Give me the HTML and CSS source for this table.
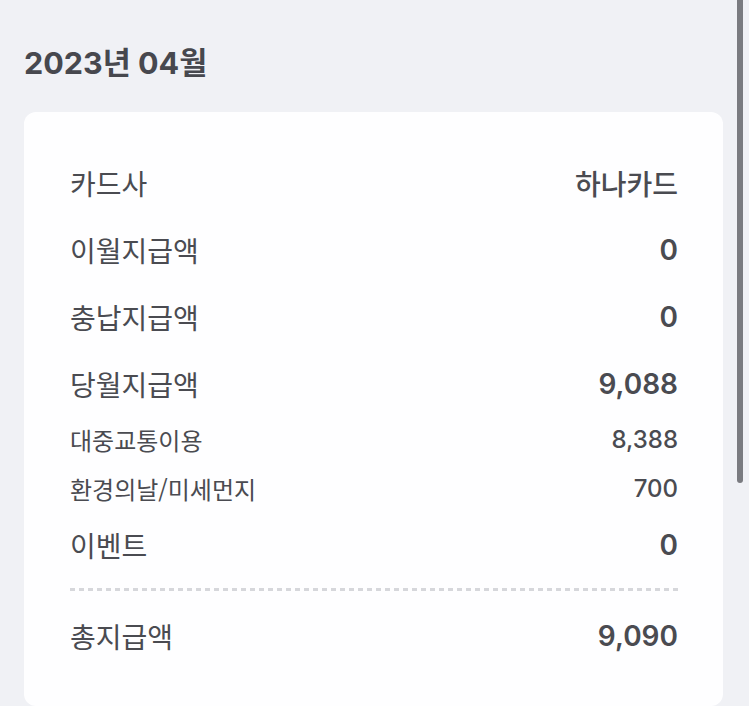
FILE: index.html
```html
<!DOCTYPE html>
<html lang="ko">
<head>
<meta charset="utf-8">
<link rel="stylesheet" href="styles.css">
</head>
<body>
<div class="page">
  <h1 class="title">2023년 04월</h1>
  <section class="card">
    <div class="row main"><span class="label">카드사</span><span class="value text">하나카드</span></div>
    <div class="row main"><span class="label">이월지급액</span><span class="value">0</span></div>
    <div class="row main"><span class="label">충납지급액</span><span class="value">0</span></div>
    <div class="row main"><span class="label">당월지급액</span><span class="value">9,088</span></div>
    <div class="subs">
      <div class="row sub"><span class="label">대중교통이용</span><span class="value">8,388</span></div>
      <div class="row sub"><span class="label">환경의날/미세먼지</span><span class="value">700</span></div>
    </div>
    <div class="row main"><span class="label">이벤트</span><span class="value">0</span></div>
    <div class="divider"></div>
    <div class="row main"><span class="label">총지급액</span><span class="value">9,090</span></div>
  </section>
</div>
<div class="scrollbar"></div>
</body>
</html>
```

FILE: styles.css
```css
* { box-sizing: border-box; }
html, body { margin: 0; padding: 0; }
body {
  background: #f0f1f5;
  font-family: "Inter", "Noto Sans CJK KR", sans-serif;
  color: #4a4b51;
  overflow: hidden;
  height: 706px;
}
.page {
  padding: 43px 26px 0 24px;
}
.title {
  margin: 0;
  font-size: 30.5px;
  line-height: 40px;
  font-weight: 700;
  color: #47484e;
}
.card {
  margin-top: 29px;
  background: #fefeff;
  border-radius: 12px;
  padding: 37px 45px 37px 46px;
}
.row {
  display: flex;
  justify-content: space-between;
  align-items: center;
}
.row.main { height: 67px; }
.row.main .label {
  font-size: 28px;
  font-weight: 400;
  font-family: "Noto Sans CJK KR", sans-serif;
}
.row.main .value {
  font-size: 28px;
  font-weight: 600;
}
.row.main .value.text {
  font-family: "Noto Sans CJK KR", sans-serif;
  font-weight: 500;
}
.subs {
  display: flex;
  flex-direction: column;
  gap: 4px;
}
.row.sub { height: 45px; }
.row.sub .label {
  font-size: 24px;
  font-weight: 400;
  font-family: "Noto Sans CJK KR", sans-serif;
}
.row.sub .value {
  font-size: 24px;
  font-weight: 500;
}
.divider {
  margin-top: 10px;
  height: 3px;
  background: repeating-linear-gradient(to right, #d6d7db 0 5px, transparent 5px 9px);
  margin-bottom: 11px;
}
.scrollbar {
  position: fixed;
  top: 0;
  left: 737px;
  width: 6px;
  height: 483px;
  background: #7a7b80;
  border-radius: 0 0 3px 3px;
}
```
